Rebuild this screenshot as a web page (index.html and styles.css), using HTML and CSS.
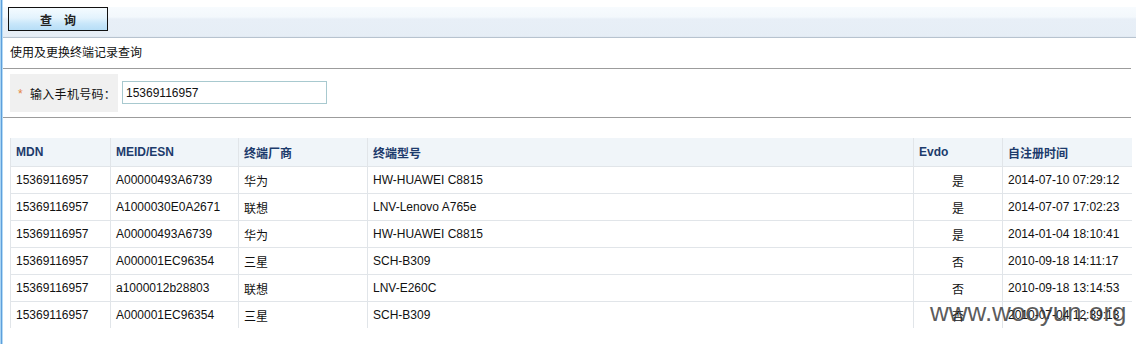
FILE: index.html
```html
<!DOCTYPE html>
<html lang="zh-CN">
<head>
<meta charset="utf-8">
<title>使用及更换终端记录查询</title>
<link rel="stylesheet" href="styles.css">
</head>
<body>
<div class="frame">
  <div class="edge"></div>
  <div class="page">
    <div class="toolbar">
      <button class="btn"><span>查</span><span>询</span></button>
    </div>
    <div class="main">
      <div class="title">使用及更换终端记录查询</div>
      <div class="rule"></div>
      <div class="form">
        <div class="lbl"><span class="star">*</span>输入手机号码：</div>
        <div class="field"><input class="inp" type="text" value="15369116957"></div>
      </div>
      <div class="rule"></div>
      <table class="grid">
        <colgroup>
          <col class="c1"><col class="c2"><col class="c3"><col class="c4"><col class="c5"><col class="c6">
        </colgroup>
        <thead>
          <tr><th>MDN</th><th>MEID/ESN</th><th>终端厂商</th><th>终端型号</th><th>Evdo</th><th>自注册时间</th></tr>
        </thead>
        <tbody>
          <tr><td>15369116957</td><td>A00000493A6739</td><td>华为</td><td>HW-HUAWEI C8815</td><td class="ctr">是</td><td>2014-07-10 07:29:12</td></tr>
          <tr><td>15369116957</td><td>A1000030E0A2671</td><td>联想</td><td>LNV-Lenovo A765e</td><td class="ctr">是</td><td>2014-07-07 17:02:23</td></tr>
          <tr><td>15369116957</td><td>A00000493A6739</td><td>华为</td><td>HW-HUAWEI C8815</td><td class="ctr">是</td><td>2014-01-04 18:10:41</td></tr>
          <tr><td>15369116957</td><td>A000001EC96354</td><td>三星</td><td>SCH-B309</td><td class="ctr">否</td><td>2010-09-18 14:11:17</td></tr>
          <tr><td>15369116957</td><td>a1000012b28803</td><td>联想</td><td>LNV-E260C</td><td class="ctr">否</td><td>2010-09-18 13:14:53</td></tr>
          <tr><td>15369116957</td><td>A000001EC96354</td><td>三星</td><td>SCH-B309</td><td class="ctr">否</td><td>2010-07-04 12:39:13</td></tr>
        </tbody>
      </table>
    </div>
  </div>
</div>
<div class="watermark">www.wooyun.org</div>
</body>
</html>
```

FILE: styles.css
```css
html, body {
  margin: 0;
  padding: 0;
  background: #fff;
  height: 344px;
  overflow: hidden;
}
body {
  font-family: "Liberation Sans", "Noto Sans CJK SC", sans-serif;
  font-size: 12px;
  color: #111;
}
.frame {
  display: flex;
  min-height: 344px;
}
.edge {
  width: 3px;
  flex: none;
  background: linear-gradient(to right, #a9d3f2 0, #a9d3f2 1px, #5d9fdc 1px, #5d9fdc 2px, #b5daf4 2px);
}
.page {
  flex: 1;
  min-width: 0;
}
.toolbar {
  height: 37px;
  box-sizing: border-box;
  padding: 7px 0 0 5px;
  background: linear-gradient(to bottom, #ffffff 0, #ffffff 7px, #f7fbfe 7px, #f3f8fc 17px, #e8eff7 19px, #e6eef6 36px, #dfe7f0 37px);
  border-bottom: 1px solid #b7c3cf;
  height: 38px;
}
.btn {
  width: 100px;
  height: 24px;
  margin: 0;
  padding: 0;
  border: 1px solid #111;
  border-radius: 0;
  background: linear-gradient(to bottom, #f4fbff 0%, #e3f3fd 45%, #c9e7fa 70%, #b7def7 100%);
  display: flex;
  align-items: center;
  justify-content: center;
  gap: 12px;
  font-family: "Noto Sans CJK SC", sans-serif;
  font-size: 12px;
  font-weight: bold;
  color: #222;
  box-sizing: border-box;
}
.main {
  padding: 0 5px 0 0;
}
.title {
  height: 30px;
  line-height: 30px;
  padding-left: 7px;
  color: #111;
}
.rule {
  height: 1px;
  background: #9c9c9c;
}
.form {
  display: flex;
  align-items: stretch;
  margin: 5px 0 5px 7px;
  height: 38px;
}
.lbl {
  width: 108px;
  box-sizing: border-box;
  background: #f0f0f0;
  display: flex;
  align-items: center;
  padding-left: 8px;
  color: #111;
  letter-spacing: 0.3px;
}
.star {
  color: #e5853f;
  font-size: 12px;
  width: 12px;
  margin-right: 0;
  position: relative;
  top: 1px;
}
.field {
  display: flex;
  align-items: center;
  padding-left: 4px;
}
.inp {
  width: 205px;
  height: 23px;
  box-sizing: border-box;
  border: 1px solid #a8c9cf;
  padding: 0 0 0 3px;
  margin: -1px 0 0 0;
  font-family: "Liberation Sans", sans-serif;
  font-size: 12px;
  color: #111;
  background: #fff;
  outline: none;
}
.grid {
  margin: 20px 0 0 7px;
  width: 1121px;
  border-collapse: collapse;
  table-layout: fixed;
}
.c1 { width: 100px; }
.c2 { width: 128px; }
.c3 { width: 129px; }
.c4 { width: 546px; }
.c5 { width: 89px; }
.c6 { width: 129px; }
.grid th, .grid td {
  border-left: 1px solid #e1e5e9;
  padding: 0 0 0 5px;
  text-align: left;
  white-space: nowrap;
  overflow: hidden;
}
.grid th {
  height: 28px;
  background: #f0f5f9;
  border-bottom: 1px solid #e1e5e9;
  color: #1d3b6c;
  font-weight: bold;
  font-size: 12px;
}
.grid td {
  height: 26px;
  border-bottom: 1px solid #e1e5e9;
}
.grid tbody tr:last-child td {
  border-bottom: none;
}
.grid td.ctr {
  text-align: center;
  padding: 0;
}
.watermark {
  position: absolute;
  left: 930px;
  top: 299px;
  font-family: "Liberation Sans", sans-serif;
  font-size: 26px;
  line-height: 26px;
  color: rgba(55, 55, 55, 0.82);
  white-space: nowrap;
  pointer-events: none;
}
```
